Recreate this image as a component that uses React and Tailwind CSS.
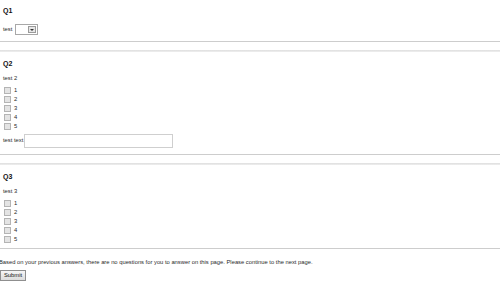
import React from 'react';

function Box({ n }) {
  return (
    <div className="flex h-[9px] items-center pl-[1px]">
      <span className="box-border h-[7px] w-[7px] border border-[#b4b4b4] bg-[#e4e4e4]" />
      <span className="ml-[3px] leading-none">{n}</span>
    </div>
  );
}

function Divider() {
  return (
    <>
      <div className="h-px w-full bg-[#cdcdcd]" />
      <div className="mt-[8px] h-[2px] w-full bg-gradient-to-b from-[#dedede] to-[#efefef]" />
    </>
  );
}

export default function App() {
  return (
    <div
      className="relative h-[304px] w-[500px] overflow-hidden bg-white text-[5.8px] text-[#2a2a2a]"
      style={{ fontFamily: '"Liberation Sans", Arial, sans-serif' }}
    >
      {/* Q1 */}
      <div className="px-[3px] pt-[7px]">
        <div className="h-[8px] text-[7px] font-bold leading-[8px] text-[#111]">Q1</div>
        <div className="mt-[9px] flex h-[11px] items-center">
          <span className="leading-none">test</span>
          <div className="ml-[3px] flex h-[11px] w-[23px] border border-[#a8a8a8] bg-white">
            <div className="flex-1" />
            <div className="m-[1px] flex w-[8px] items-center justify-center border border-[#9a9a9a] bg-[#e6e6e6]">
              <span className="h-0 w-0 border-x-[2px] border-t-[2px] border-x-transparent border-t-[#333]" />
            </div>
          </div>
        </div>
      </div>
      <div className="mt-[6px]">
        <Divider />
      </div>

      {/* Q2 */}
      <div className="px-[3px] pt-[8px]">
        <div className="h-[8px] text-[7px] font-bold leading-[8px] text-[#111]">Q2</div>
        <div className="mt-[6px] h-[8px] leading-[8px]">test 2</div>
        <div className="mt-[4px]">
          {[1, 2, 3, 4, 5].map((n) => (
            <Box key={n} n={n} />
          ))}
        </div>
        <div className="mt-[3px] flex h-[14px] items-center">
          <span className="leading-none">test text</span>
          <div className="ml-[1px] h-[14px] w-[149px] border border-[#cfcfcf] bg-white" />
        </div>
      </div>
      <div className="mt-[6px]">
        <Divider />
      </div>

      {/* Q3 */}
      <div className="px-[3px] pt-[8px]">
        <div className="h-[8px] text-[7px] font-bold leading-[8px] text-[#111]">Q3</div>
        <div className="mt-[6px] h-[8px] leading-[8px]">test 3</div>
        <div className="mt-[4px]">
          {[1, 2, 3, 4, 5].map((n) => (
            <Box key={n} n={n} />
          ))}
        </div>
      </div>
      <div className="mt-[4px] h-px w-full bg-[#cdcdcd]" />

      <div className="ml-[-1px] mt-[9px] h-[8px] whitespace-nowrap leading-[8px]">
        Based on your previous answers, there are no questions for you to answer on this page. Please continue to the next page.
      </div>
      <button className="mt-[4px] flex h-[11px] items-center border border-[#8f8f8f] bg-gradient-to-b from-[#f6f6f6] to-[#dcdcdc] px-[3px] text-[5.8px] leading-none text-[#111]">
        Submit
      </button>
    </div>
  );
}
